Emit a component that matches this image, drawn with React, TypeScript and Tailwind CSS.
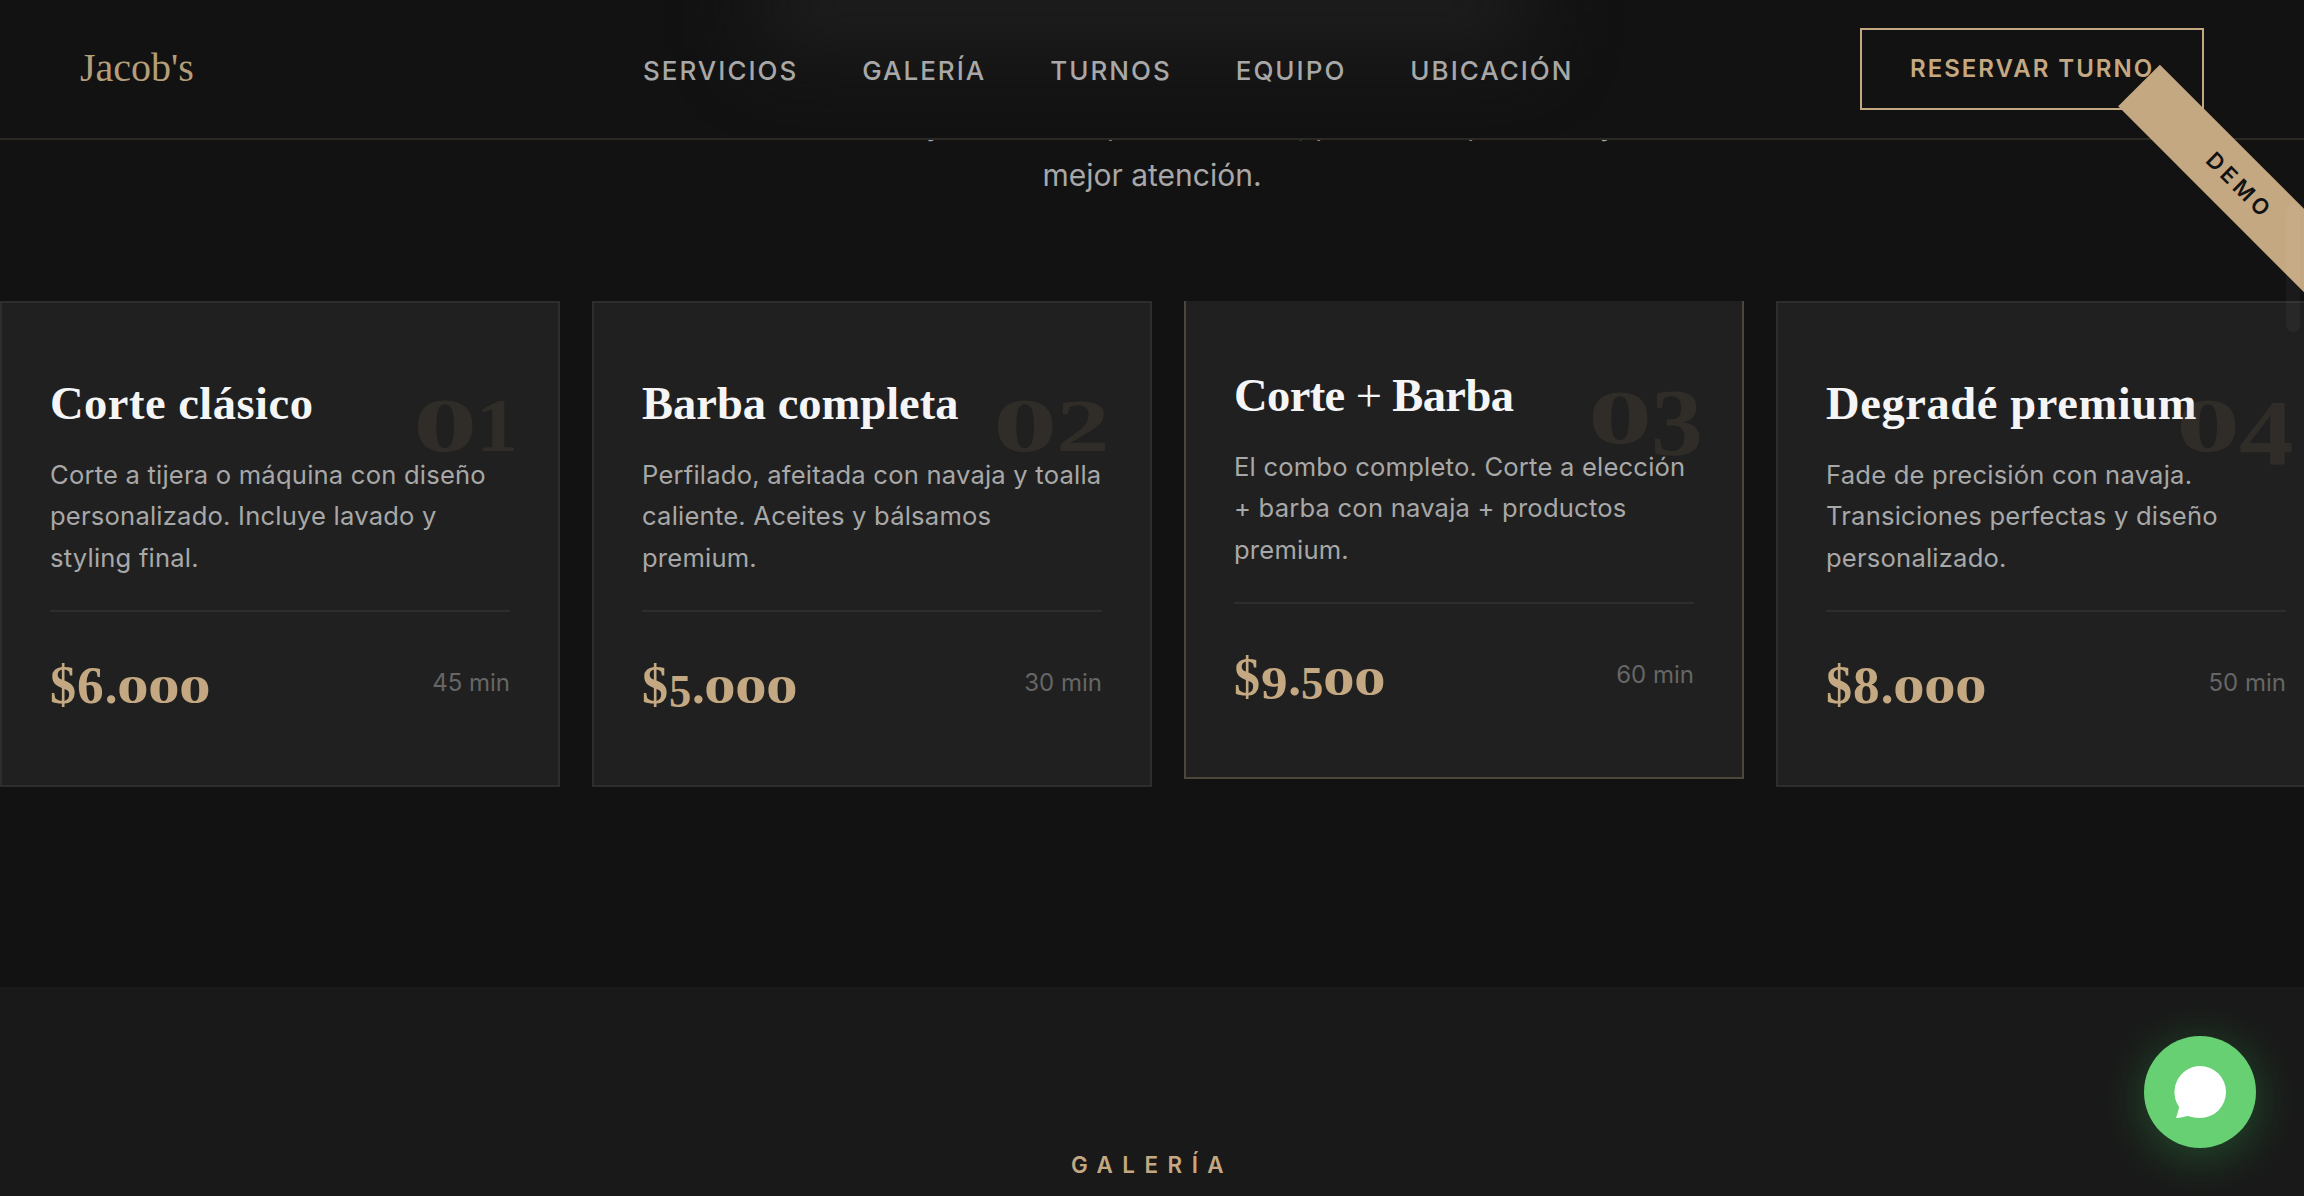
import React from "react";

const NAV = ["SERVICIOS", "GALERÍA", "TURNOS", "EQUIPO", "UBICACIÓN"];

type Service = {
  index: string;
  title: React.ReactNode;
  spacing: string;
  text: string[];
  price: string;
  time: string;
  featured?: boolean;
};

const SERVICES: Service[] = [
  {
    index: "01",
    title: "Corte clásico",
    spacing: "tracking-[0.5px]",
    text: ["Corte a tijera o máquina con diseño", "personalizado. Incluye lavado y", "styling final."],
    price: "$6.000",
    time: "45 min",
  },
  {
    index: "02",
    title: "Barba completa",
    spacing: "tracking-[0px]",
    text: ["Perfilado, afeitada con navaja y toalla", "caliente. Aceites y bálsamos", "premium."],
    price: "$5.000",
    time: "30 min",
  },
  {
    index: "03",
    title: (
      <>
        Corte <span className="font-normal">+</span> Barba
      </>
    ),
    spacing: "tracking-[-0.6px]",
    text: ["El combo completo. Corte a elección", "+ barba con navaja + productos", "premium."],
    price: "$9.500",
    time: "60 min",
    featured: true,
  },
  {
    index: "04",
    title: "Degradé premium",
    spacing: "tracking-[0.6px]",
    text: ["Fade de precisión con navaja.", "Transiciones perfectas y diseño", "personalizado."],
    price: "$8.000",
    time: "50 min",
  },
];

/* Old-style figures: each glyph gets its own advance width, scale and drop below the baseline. */
const PRICE_FIGURES: Record<string, [string, string]> = {
  $: ["w-[0.53em]", "scale-x-[1.02] scale-y-[1.08]"],
  ".": ["w-[0.24em]", ""],
  "0": ["w-[0.605em]", "scale-x-[1.24] scale-y-[0.77]"],
  "5": ["w-[0.445em]", "translate-y-[0.08em] scale-x-[0.87] scale-y-[0.92]"],
  "6": ["w-[0.54em]", "scale-x-[1.04] scale-y-[1.03]"],
  "8": ["w-[0.54em]", "scale-x-[1.04] scale-y-[1.04]"],
  "9": ["w-[0.53em]", "translate-y-[0.08em] scale-x-[1.04] scale-y-[0.92]"],
};

const INDEX_FIGURES: Record<string, [string, string]> = {
  "0": ["w-[0.655em]", "scale-x-[1.34] scale-y-[0.79]"],
  "1": ["w-[0.42em]", "scale-x-[0.88] scale-y-[0.79]"],
  "2": ["w-[0.54em]", "scale-x-[1.12] scale-y-[0.78]"],
  "3": ["w-[0.51em]", "translate-y-[0.125em] scale-x-[1.08]"],
  "4": ["w-[0.55em]", "translate-y-[0.135em] scale-x-[1.14] scale-y-[0.97]"],
};

function Figures({ value, set }: { value: string; set: Record<string, [string, string]> }) {
  return (
    <span className="flex leading-none">
      {value.split("").map((c, i) => (
        <span key={i} className={set[c][0]}>
          <span className={"inline-block origin-[0_0.84em] " + set[c][1]}>{c}</span>
        </span>
      ))}
    </span>
  );
}

function ServiceCard({ s }: { s: Service }) {
  return (
    <article
      className={
        "relative h-[486px] w-[560px] shrink-0 border-2 bg-[#202020] px-12 pt-[71px] " +
        (s.featured ? "-translate-y-2 border-[#4d473b]" : "border-[#2d2d2d]")
      }
    >
      <h3 className={"whitespace-nowrap font-['Liberation_Serif',serif] text-[46.5px] font-bold leading-[60px] text-[#f5f5f5] " + s.spacing}>
        {s.title}
      </h3>
      <div className="absolute right-[42px] top-[68px] font-['Liberation_Serif',serif] text-[96px] font-bold text-[#c4a882]/10">
        <Figures value={s.index} set={INDEX_FIGURES} />
      </div>
      <p className="mt-[20px] whitespace-nowrap text-[25.6px] leading-[41.4px] tracking-[0.2px] text-[#a8a8a8]">
        {s.text.map((line) => (
          <span key={line} className="block">
            {line}
          </span>
        ))}
      </p>
      <div className="mt-[31.6px] flex items-start justify-between border-t-2 border-[#2d2d2d] pt-[48px]">
        <div className="font-['Liberation_Serif',serif] text-[51.2px] font-bold text-[#c4a882]">
          <Figures value={s.price} set={PRICE_FIGURES} />
        </div>
        <span className="pt-[5px] text-[24px] leading-[36px] text-[#666]">{s.time}</span>
      </div>
    </article>
  );
}

export default function App() {
  return (
    <div className="relative flex h-[1196px] w-[2304px] flex-col overflow-hidden bg-[#121212] font-['Inter',sans-serif]">
      <header className="relative z-10 flex h-[140px] shrink-0 items-center justify-between overflow-hidden border-b-2 border-[#2c2924] bg-[#121212] pl-20 pr-[100px]">
        <div className="absolute left-[760px] top-[-40px] h-[90px] w-[770px] bg-[#1e1e1e] blur-[40px]" />
        <div className="relative w-[563px] pb-[2px] font-['Liberation_Serif',serif] text-[40px] leading-none text-[#b49e79]">Jacob's</div>
        <nav className="relative flex flex-1 gap-[64px] pt-[2px] text-[26px] font-medium tracking-[2px] text-[#a8a8a8]">
          {NAV.map((n) => (
            <a key={n}>{n}</a>
          ))}
        </nav>
        <button className="relative flex h-[82px] w-[344px] items-center border-2 border-[#c4a882] pl-12 text-[24px] font-semibold tracking-[2px] text-[#c4a882]">
          RESERVAR TURNO
        </button>
      </header>

      <section className="flex h-[847px] shrink-0 flex-col">
        <p className="-mt-[41px] text-center text-[30px] leading-[51px] text-[#a8a8a8]">
          Tratamientos finos y materiales profesionales, productos premium y la
          <br />
          mejor atención.
        </p>
        <div className="mt-[100px] flex gap-8 overflow-hidden">
          {SERVICES.map((s) => (
            <ServiceCard key={s.index} s={s} />
          ))}
        </div>
      </section>

      <section className="flex flex-1 justify-center bg-[#191919] pt-[165px]">
        <h2 className="text-[22.4px] font-semibold leading-[26px] tracking-[9.5px] text-[#c4a882]">GALERÍA</h2>
      </section>

      <div className="absolute left-[2098px] top-[155px] z-20 flex h-[59px] w-[280px] rotate-45 items-center justify-center bg-[#c4a882] pl-[4px] text-[22px] font-semibold tracking-[4.4px] text-[#121212]">
        DEMO
      </div>
      <div className="absolute right-[4px] top-[204px] z-30 h-[128px] w-[14px] rounded-full bg-white/[0.035]" />

      <button className="absolute left-[2144px] top-[1036px] flex size-[112px] items-center justify-center rounded-full bg-[#66d072] shadow-[0_8px_48px_rgba(60,200,90,0.32)]">
        <svg viewBox="0 0 52 52" className="size-[52px] fill-white">
          <path d="M26 0a26 26 0 1 1 0 52c-4.300 0-8.200-.9-12-2-4 .7-7.500 2-12 2 1.200-3.500 2.300-7 3.200-11A26 26 0 0 1 26 0Z" />
        </svg>
      </button>
    </div>
  );
}
